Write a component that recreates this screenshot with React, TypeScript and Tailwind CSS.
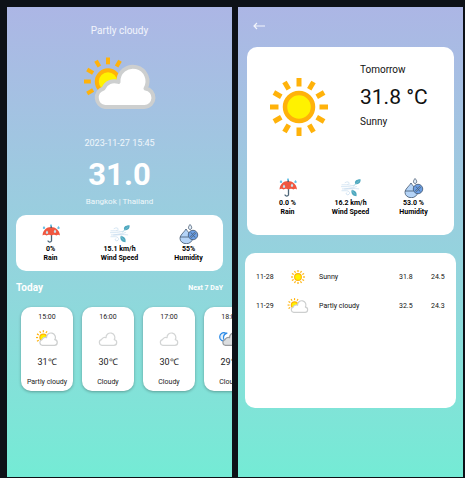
type IconProps = { className?: string };

const RAYS = [0, 30, 60, 90, 120, 150, 180, 210, 240, 270, 300, 330];
const CLOUD =
  "M21 50A9.5 9.5 0 0 1 19.5 31.5A11.5 11.5 0 0 1 34.5 25A14.5 14.5 0 1 1 61.5 31.5A9.3 9.3 0 0 1 60.5 50Z";

function SunIcon({ className }: IconProps) {
  return (
    <svg viewBox="0 0 58 58" className={className} aria-hidden="true">
      <circle cx="29" cy="29" r="14" fill="#fff200" stroke="#ffb20a" strokeWidth="4.5" />
      {RAYS.map((a) => (
        <rect key={a} x="26.5" y="0" width="5" height="8.5" fill="#ffb20a" transform={`rotate(${a} 29 29)`} />
      ))}
    </svg>
  );
}

function PartlyCloudyIcon({ className }: IconProps) {
  return (
    <svg viewBox="0 0 72 52" className={className} aria-hidden="true">
      <circle cx="24" cy="24.5" r="11.2" fill="#fff200" stroke="#ffb20a" strokeWidth="4" />
      {[0, 30, 240, 270, 300, 330].map((a) => (
        <rect key={a} x="22" y="0.5" width="4" height="6.8" fill="#ffb20a" transform={`rotate(${a} 24 24.5)`} />
      ))}
      <path d={CLOUD} fill="#fff" stroke="#cdcfcf" strokeWidth="4" strokeLinejoin="round" />
    </svg>
  );
}

function CloudIcon({ className }: IconProps) {
  return (
    <svg viewBox="5 0 72 52" className={className} aria-hidden="true">
      <path d={CLOUD} fill="#fff" stroke="#d3d5d5" strokeWidth="4" strokeLinejoin="round" />
    </svg>
  );
}

function NightCloudIcon({ className }: IconProps) {
  return (
    <svg viewBox="0 0 72 52" className={className} aria-hidden="true">
      <path d="M20 9A14 14 0 1 0 20 36C12 30 12 14 26 10Z" fill="#e3f0fb" stroke="#2b8ae6" strokeWidth="4" strokeLinejoin="round" />
      <path d={CLOUD} fill="#dcdee0" stroke="#999c9f" strokeWidth="4" strokeLinejoin="round" />
    </svg>
  );
}

function UmbrellaIcon({ className }: IconProps) {
  return (
    <svg viewBox="0 0 40 40" className={className} aria-hidden="true">
      <path d="M21 8V34a4 4 0 0 1-7 0" fill="none" stroke="#4c6577" strokeWidth="2.6" strokeLinecap="round" />
      <path d="M3 23C4 12 11 6 20 6s17 6 18 17q-4-3-7 0q-5-3-10 0q-5-3-10 0q-4-3-8 0Z" fill="#f0563f" />
      <path d="M19 5q2-3 3 0v3h-3Z" fill="#4c6577" />
      <g fill="#65bfe4">
        <path d="M6 4q5 5 0 6q-5-1 0-6ZM20 0q4 4 0 5q-4-1 0-5ZM35 4q5 5 0 6q-5-1 0-6Z" />
      </g>
      <g fill="#c6e4ef">
        <path d="M12 13q5 6 0 7q-5-1 0-7ZM28 11q5 6 0 7q-5-1 0-7Z" />
      </g>
    </svg>
  );
}

function WindIcon({ className }: IconProps) {
  return (
    <svg viewBox="0 0 44 40" className={className} aria-hidden="true">
      <g fill="none" stroke="#bfd8ec" strokeWidth="1.4" strokeLinecap="round">
        <path d="M2 13h11c9 0 11 4 18 0M1 17h13c9 0 11 4 20 0M9 8c8-5 13 3 6 4M3 22h15c7-1 10 1 7 5M2 26h10c8 0 9 8 3 9c-4 0-5-4-2-5M8 22c13-2 20-1 31 0" />
      </g>
      <path d="M43 1C33 1 28 6 32 12C40 12 44 8 43 1ZM23 25C31 24 36 30 34 38C26 38 22 33 23 25Z" fill="#4fa8bf" />
      <path d="M40 4L27 16M25 27l6 7" fill="none" stroke="#8bccd9" strokeWidth="1.2" />
    </svg>
  );
}

function HumidityIcon({ className }: IconProps) {
  return (
    <svg viewBox="0 0 40 40" className={className} aria-hidden="true">
      <g stroke="#3a4d66" strokeWidth="1.5" strokeLinejoin="round">
        <path d="M14 10C9 18 2 22 2 29a12 10 0 0 0 25 0C27 23 19 18 14 10Z" fill="#b5d4f7" />
        <path d="M22 1C18 6 18 10 22 11C27 10 26 5 22 1Z" fill="#e4f0fb" />
        <path d="M2 26h17" fill="none" />
        <circle cx="28" cy="22" r="9.5" fill="#6c9fe4" />
        <path d="M24 17l8 10" fill="none" />
        <circle cx="31" cy="19" r="1.6" fill="#b5d4f7" />
        <circle cx="25" cy="25" r="1.6" fill="#b5d4f7" />
      </g>
    </svg>
  );
}

function Stats({ rain, wind, humidity }: { rain: string; wind: string; humidity: string }) {
  const items = [
    { label: "Rain", value: rain, Icon: UmbrellaIcon },
    { label: "Wind Speed", value: wind, Icon: WindIcon },
    { label: "Humidity", value: humidity, Icon: HumidityIcon },
  ];
  return (
    <ul className="grid grid-cols-3">
      {items.map(({ label, value, Icon }) => (
        <li key={label} className="flex flex-col items-center text-[7px] leading-[9px] font-bold text-black">
          <Icon className="mb-px h-5 w-5" />
          <span>{value}</span>
          <span>{label}</span>
        </li>
      ))}
    </ul>
  );
}

const HOURS = [
  { time: "15:00", temp: "31℃", text: "Partly cloudy", Icon: PartlyCloudyIcon },
  { time: "16:00", temp: "30℃", text: "Cloudy", Icon: CloudIcon },
  { time: "17:00", temp: "30℃", text: "Cloudy", Icon: CloudIcon },
  { time: "18:00", temp: "29℃", text: "Cloudy", Icon: NightCloudIcon },
];

const DAYS = [
  { date: "11-28", text: "Sunny", max: "31.8", min: "24.5", Icon: SunIcon, size: "h-[14px]" },
  { date: "11-29", text: "Partly cloudy", max: "32.5", min: "24.3", Icon: PartlyCloudyIcon, size: "h-[15px]" },
];

function TodayScreen() {
  return (
    <section className="flex min-w-0 flex-col overflow-hidden bg-linear-to-b from-[#acb6e5] to-[#74ebd5] px-[9px] text-white">
      <header className="flex flex-col items-center pt-4">
        <h1 className="text-[10px] leading-4 text-white/85">Partly cloudy</h1>
        <PartlyCloudyIcon className="mt-[18px] h-[52px] w-[72px]" />
        <time className="mt-[26px] text-[9px] leading-4 text-white/85">2023-11-27 15:45</time>
        <p className="mt-2 text-[31px] leading-8 font-bold">31.0</p>
        <p className="mt-[3px] text-[8px] leading-4 text-white/85">Bangkok | Thailand</p>
      </header>
      <div className="mt-[5px] rounded-[10px] bg-white pt-[9px] pb-2">
        <Stats rain="0%" wind="15.1 km/h" humidity="55%" />
      </div>
      <div className="mt-[9px] flex items-center justify-between leading-4">
        <h2 className="text-[10px] font-bold">Today</h2>
        <a href="#forecast" className="text-[7px] font-bold">Next 7 DaY</a>
      </div>
      <ul className="-mr-[9px] flex gap-[9px] overflow-hidden pt-[11px] pb-3 pl-[5px]">
        {HOURS.map(({ time, temp, text, Icon }) => (
          <li
            key={time}
            className="flex w-[52px] shrink-0 flex-col items-center rounded-[10px] bg-white pt-1 pb-[3px] text-[7px] leading-3 whitespace-nowrap text-[#222] shadow-[0_1px_3px_rgba(0,0,0,0.3)]"
          >
            <span>{time}</span>
            <Icon className="mt-[7px] h-4 w-[22px]" />
            <span className="mt-[10px] text-[9px]">{temp}</span>
            <span className="mt-2">{text}</span>
          </li>
        ))}
      </ul>
    </section>
  );
}

function ForecastScreen() {
  return (
    <section id="forecast" className="flex min-w-0 flex-col bg-linear-to-b from-[#acb6e5] to-[#74ebd5] px-[9px] text-[#111]">
      <button type="button" aria-label="Back" className="mt-[13px] ml-1.5 flex h-3 w-3 items-center">
        <svg viewBox="0 0 12 12" className="h-3 w-3 fill-none stroke-white/85" aria-hidden="true">
          <path d="M12 6H1M4 3L1 6l3 3" strokeWidth="1.2" />
        </svg>
      </button>
      <div className="mt-[15px] rounded-[10px] bg-white px-[9px] pt-[15px] pb-[18px]">
        <div className="flex">
          <SunIcon className="mt-4 ml-[14px] h-[58px] w-[58px] shrink-0" />
          <div className="ml-8 whitespace-nowrap">
            <h2 className="text-[10px] leading-4">Tomorrow</h2>
            <p className="mt-1 text-[21px] leading-[30px]">31.8 °C</p>
            <p className="mt-[2px] text-[10px] leading-4">Sunny</p>
          </div>
        </div>
        <div className="mt-[42px]">
          <Stats rain="0.0 %" wind="16.2 km/h" humidity="53.0 %" />
        </div>
      </div>
      <div className="-mx-[2px] mt-[18px] min-h-[155px] rounded-[10px] bg-white px-[11px] pt-[9px]">
        <table className="w-full table-fixed text-left text-[7px] leading-3 whitespace-nowrap">
          <colgroup>
            <col className="w-[31px]" />
            <col className="w-[27px]" />
            <col />
            <col className="w-8" />
            <col className="w-[14px]" />
          </colgroup>
          <tbody>
            {DAYS.map(({ date, text, max, min, Icon, size }) => (
              <tr key={date} className="h-[29px]">
                <td>{date}</td>
                <td>
                  <Icon className={`w-[22px] ${size}`} />
                </td>
                <td className="pl-[5px]">{text}</td>
                <td>{max}</td>
                <td>{min}</td>
              </tr>
            ))}
          </tbody>
        </table>
      </div>
    </section>
  );
}

export default function App() {
  return (
    <main className="grid min-h-screen grid-cols-2 gap-1.5 bg-[#0d1117] pt-[7px] pr-[2px] pb-px pl-[7px] font-[Roboto,sans-serif]">
      <TodayScreen />
      <ForecastScreen />
    </main>
  );
}
